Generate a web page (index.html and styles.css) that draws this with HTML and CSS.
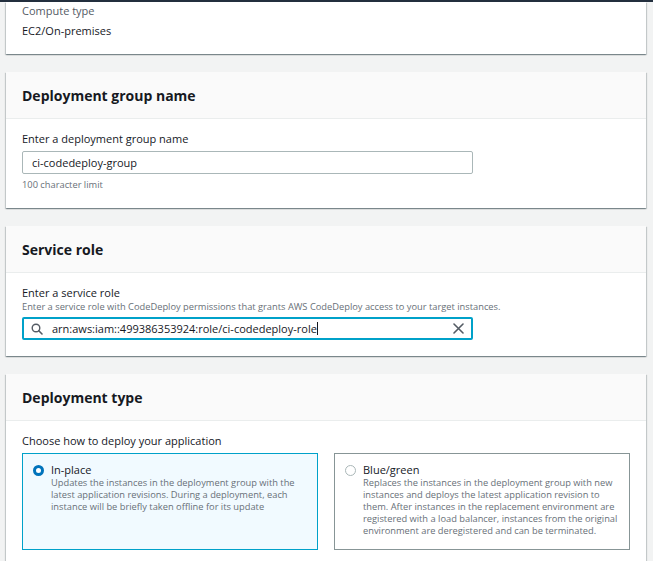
FILE: index.html
```html
<!DOCTYPE html>
<html lang="en">
<head>
  <meta charset="UTF-8" />
  <title>Create deployment group</title>
  <link rel="stylesheet" href="styles.css">
</head>
<body>
  <div class="topbar"></div>

  <div class="page">
    <section class="card card-top">
      <div class="card-body">
        <div class="field-label muted">Compute type</div>
        <div class="value">EC2/On-premises</div>
      </div>
    </section>

    <section class="card">
      <div class="card-header"><h2>Deployment group name</h2></div>
      <div class="card-body">
        <label class="field-label" for="groupName">Enter a deployment group name</label>
        <div class="input">
          <span class="input-text">ci-codedeploy-group</span>
        </div>
        <div class="hint">100 character limit</div>
      </div>
    </section>

    <section class="card">
      <div class="card-header"><h2>Service role</h2></div>
      <div class="card-body">
        <label class="field-label">Enter a service role</label>
        <div class="desc">Enter a service role with CodeDeploy permissions that grants AWS CodeDeploy access to your target instances.</div>
        <div class="input input-focus">
          <svg class="search-icon" width="12" height="12" viewBox="0 0 12 12">
            <circle cx="5" cy="5" r="3.8" fill="none" stroke="#545b64" stroke-width="1.4"/>
            <line x1="7.8" y1="7.8" x2="11" y2="11" stroke="#545b64" stroke-width="1.6" stroke-linecap="round"/>
          </svg>
          <span class="input-text">arn:aws:iam::499386353924:role/ci-codedeploy-role<span class="caret"></span></span>
          <svg class="clear-icon" width="11" height="11" viewBox="0 0 11 11">
            <path d="M1 1 L10 10 M10 1 L1 10" stroke="#545b64" stroke-width="1.6" stroke-linecap="round"/>
          </svg>
        </div>
      </div>
    </section>

    <section class="card">
      <div class="card-header"><h2>Deployment type</h2></div>
      <div class="card-body">
        <div class="field-label">Choose how to deploy your application</div>
        <div class="tiles">
          <div class="tile tile-selected">
            <span class="radio radio-on"></span>
            <div>
              <div class="tile-title">In-place</div>
              <div class="tile-desc">Updates the instances in the deployment group with the latest application revisions. During a deployment, each instance will be briefly taken offline for its update</div>
            </div>
          </div>
          <div class="tile">
            <span class="radio"></span>
            <div>
              <div class="tile-title">Blue/green</div>
              <div class="tile-desc">Replaces the instances in the deployment group with new instances and deploys the latest application revision to them. After instances in the replacement environment are registered with a load balancer, instances from the original environment are deregistered and can be terminated.</div>
            </div>
          </div>
        </div>
      </div>
    </section>
  </div>
</body>
</html>
```

FILE: styles.css
```css
body {
  margin: 0;
  background: #f2f3f3;
  font-family: "Open Sans", Arial, sans-serif;
  color: #16191f;
  overflow: hidden;
}
.topbar {
  height: 2px;
  background: #232f3e;
}
.page {
  width: 640px;
  margin-left: 6px;
  display: flex;
  flex-direction: column;
  gap: 18px;
}
.card {
  background: #fff;
  box-shadow: 0 1px 1px 0 rgba(0, 28, 36, 0.3), 1px 1px 1px 0 rgba(0, 28, 36, 0.15), -1px 1px 1px 0 rgba(0, 28, 36, 0.15);
}
.card-top .card-body {
  padding: 1px 16px 15px;
}
.card-header {
  background: #fafafa;
  border-bottom: 1px solid #eaeded;
  height: 46px;
  padding: 0 16px;
  display: flex;
  align-items: center;
}
.card-header h2 {
  margin: 0;
  font-size: 14px;
  font-weight: 700;
}
.card-body {
  padding: 12px 16px 16px;
}
.field-label {
  display: block;
  font-size: 11px;
  line-height: 16px;
}
.muted {
  color: #545b64;
}
.value {
  font-size: 11px;
  line-height: 16px;
  margin-top: 4px;
}
.input {
  width: 451px;
  height: 23px;
  box-sizing: border-box;
  border: 1px solid #aab7b8;
  border-radius: 2px;
  margin-top: 4px;
  display: flex;
  align-items: center;
  padding: 0 9px;
  font-size: 11px;
}
.input-focus {
  border: 2px solid #00a1c9;
  padding: 0 7px 0 7px;
}
.input-text {
  flex: 1;
  white-space: nowrap;
}
.search-icon {
  margin-right: 9px;
}
.caret {
  display: inline-block;
  width: 1px;
  height: 13px;
  background: #16191f;
  vertical-align: -2px;
}
.hint {
  font-size: 9.3px;
  color: #687078;
  margin-top: 3px;
  line-height: 15px;
}
.desc {
  font-size: 9.3px;
  color: #687078;
  line-height: 12px;
}
.tiles {
  display: grid;
  grid-template-columns: 1fr 1fr;
  gap: 16px;
  margin-top: 4px;
  width: 608px;
}
.tile {
  border: 1px solid #879596;
  height: 97px;
  box-sizing: border-box;
  padding: 9px 10px;
  display: flex;
  align-items: flex-start;
  gap: 7px;
}
.tile-selected {
  border-color: #00a1c9;
  background: #f1faff;
}
.radio {
  width: 11px;
  height: 11px;
  box-sizing: border-box;
  border: 1px solid #aab7b8;
  border-radius: 50%;
  flex: none;
  margin-top: 2px;
  background: #fff;
}
.radio-on {
  border: 3px solid #0073bb;
}
.tile-title {
  font-size: 11px;
  line-height: 14px;
}
.tile-desc {
  font-size: 9.3px;
  line-height: 12px;
  color: #687078;
}
```
